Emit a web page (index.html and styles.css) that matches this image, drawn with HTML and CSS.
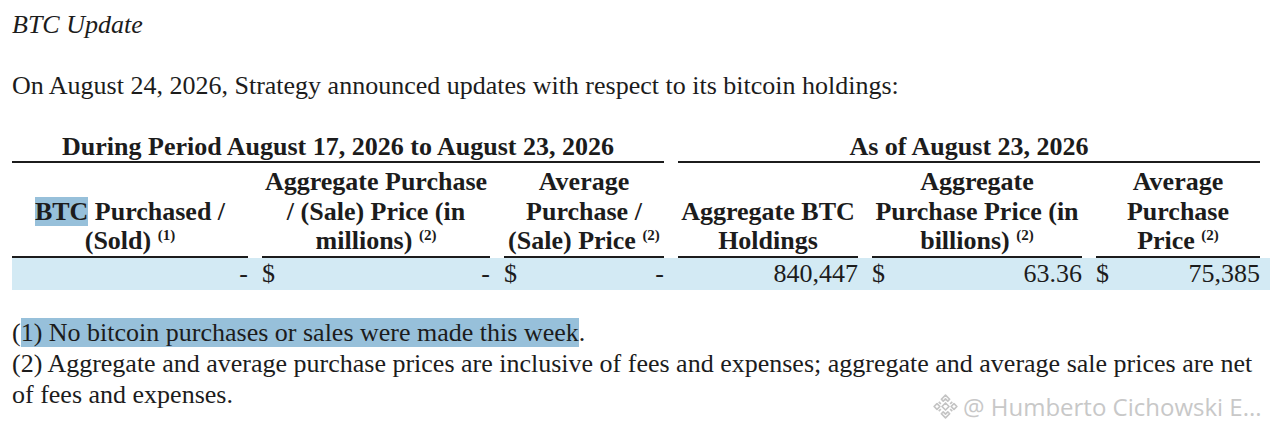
FILE: index.html
```html
<!DOCTYPE html>
<html>
<head>
<meta charset="utf-8">
<link rel="stylesheet" href="styles.css">
</head>
<body>
<div class="page">
  <p class="title">BTC Update</p>
  <p class="intro">On August 24, 2026, Strategy announced updates with respect to its bitcoin holdings:</p>
  <div class="table">
    <div class="group g1">During Period August 17, 2026 to August 23, 2026</div>
    <div class="group g2">As of August 23, 2026</div>
    <div class="head"><span class="lbl"><span class="sel">BTC</span> Purchased /<br>(Sold) <sup>(1)</sup></span></div>
    <div class="head"><span class="lbl">Aggregate Purchase<br>/ (Sale) Price (in<br>millions) <sup>(2)</sup></span></div>
    <div class="head"><span class="lbl">Average<br>Purchase /<br>(Sale) Price <sup>(2)</sup></span></div>
    <div class="head"><span class="lbl">Aggregate BTC<br>Holdings</span></div>
    <div class="head"><span class="lbl">Aggregate<br>Purchase Price (in<br>billions) <sup>(2)</sup></span></div>
    <div class="head"><span class="lbl">Average<br>Purchase<br>Price <sup>(2)</sup></span></div>
    <div class="row">
      <div class="cell"><span></span><span>-</span></div>
      <div class="cell"><span>$</span><span>-</span></div>
      <div class="cell"><span>$</span><span>-</span></div>
      <div class="cell"><span></span><span>840,447</span></div>
      <div class="cell"><span>$</span><span>63.36</span></div>
      <div class="cell"><span>$</span><span>75,385</span></div>
    </div>
  </div>
  <div class="notes">
    <p>(<span class="sel">1) No bitcoin purchases or sales were made this week</span>.</p>
    <p>(2) Aggregate and average purchase prices are inclusive of fees and expenses; aggregate and average sale prices are net<br>of fees and expenses.</p>
  </div>
</div>
<div class="watermark">
  <svg class="logo" viewBox="0 0 28 28" width="29" height="29">
    <g fill="none" stroke="#c4c4c4" stroke-width="1.6" stroke-linejoin="round">
      <path d="M14 3 L18 7 L16.2 8.8 L14 6.6 L11.8 8.8 L10 7 Z"/>
      <path d="M14 25 L18 21 L16.2 19.2 L14 21.4 L11.8 19.2 L10 21 Z"/>
      <path d="M3 14 L5.8 11.2 L8.6 14 L5.8 16.8 Z"/>
      <path d="M25 14 L22.2 11.2 L19.4 14 L22.2 16.8 Z"/>
      <path d="M14 10.6 L17.4 14 L14 17.4 L10.6 14 Z"/>
      <path d="M7.5 9.5 L9.5 11.5"/>
      <path d="M20.5 9.5 L18.5 11.5"/>
      <path d="M7.5 18.5 L9.5 16.5"/>
      <path d="M20.5 18.5 L18.5 16.5"/>
    </g>
  </svg>
  <span>@ Humberto Cichowski E...</span>
</div>
</body>
</html>
```

FILE: styles.css
```css
html, body {
  margin: 0;
  padding: 0;
  background: #ffffff;
}
.page {
  padding: 0 0 0 12px;
  font-family: "Liberation Serif", "Times New Roman", serif;
  color: #1c1c1c;
  font-size: 26px;
}
.title {
  margin: 0;
  padding-top: 11px;
  font-style: italic;
  line-height: 28px;
}
.intro {
  margin: 0;
  padding-top: 33px;
  line-height: 28px;
}
.table {
  display: grid;
  grid-template-columns: 236px 228px 160px 180px 210px 164px;
  column-gap: 14px;
  margin-top: 33px;
  font-weight: bold;
  width: 1248px;
  position: relative;
}
.group {
  text-align: center;
  line-height: 28px;
  border-bottom: 2px solid #1c1c1c;
}
.g1 { grid-column: 1 / 4; }
.g2 { grid-column: 4 / 7; }
.head {
  display: flex;
  align-items: flex-end;
  justify-content: center;
  text-align: center;
  line-height: 29.5px;
  padding-top: 4px;
  border-bottom: 2px solid #1c1c1c;
}
.lbl { display: block; white-space: nowrap; }
sup {
  font-size: 15px;
  line-height: 0;
  vertical-align: 0;
  position: relative;
  top: -9px;
}
.row {
  grid-column: 1 / 7;
  display: grid;
  grid-template-columns: 236px 228px 160px 180px 210px 164px;
  column-gap: 14px;
  background: #d3eaf4;
  font-weight: normal;
  line-height: 32px;
  margin-right: -10px;
  padding-right: 10px;
}
.cell {
  display: flex;
  justify-content: space-between;
}
.sel {
  background: #97c0da;
}
.notes {
  margin-top: 27px;
}
.notes p {
  margin: 0;
  line-height: 31px;
  padding-right: 8px;
}
.watermark {
  position: absolute;
  left: 931px;
  top: 390px;
  display: flex;
  align-items: center;
  gap: 3px;
  font-family: "Open Sans", sans-serif;
  font-size: 24px;
  color: #c8c8c8;
  text-shadow: 0 0 1px #ffffff;
}
.logo { display: block; }
```
